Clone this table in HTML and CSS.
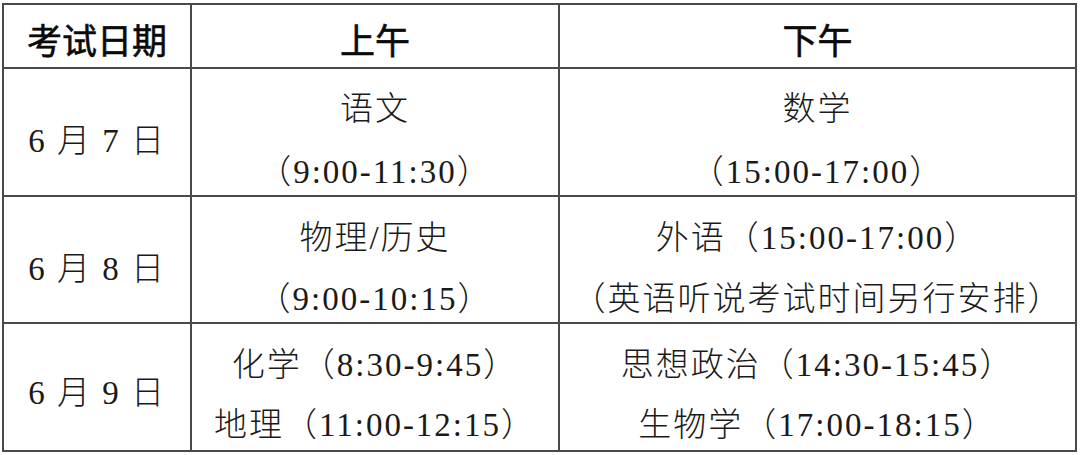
FILE: index.html
```html
<!DOCTYPE html>
<html lang="zh-CN">
<head>
<meta charset="utf-8">
<title>考试日程</title>
<link rel="stylesheet" href="styles.css">
</head>
<body>
<div class="wrap">
  <div class="schedule">
    <div class="cell head">考试日期</div>
    <div class="cell head">上午</div>
    <div class="cell head">下午</div>

    <div class="cell date r1">6 月 7 日</div>
    <div class="cell body r1"><div class="line">语文</div><div class="line">（9:00-11:30）</div></div>
    <div class="cell body r1"><div class="line">数学</div><div class="line">（15:00-17:00）</div></div>

    <div class="cell date r2">6 月 8 日</div>
    <div class="cell body r2"><div class="line">物理/历史</div><div class="line">（9:00-10:15）</div></div>
    <div class="cell body r2"><div class="line">外语（15:00-17:00）</div><div class="line">（英语听说考试时间另行安排）</div></div>

    <div class="cell date r3">6 月 9 日</div>
    <div class="cell body r3"><div class="line">化学（8:30-9:45）</div><div class="line">地理（11:00-12:15）</div></div>
    <div class="cell body r3"><div class="line">思想政治（14:30-15:45）</div><div class="line">生物学（17:00-18:15）</div></div>
  </div>
</div>
</body>
</html>
```

FILE: styles.css
```css
html, body {
  margin: 0;
  padding: 0;
  background: #ffffff;
}

.wrap {
  padding: 3px 0 0 2px;
}

.schedule {
  display: grid;
  grid-template-columns: 186px 366px 515px;
  grid-template-rows: 62px 126px 125px 126px;
  gap: 2px;
  padding: 2px;
  width: 1075px;
  box-sizing: border-box;
  background: #4a4a4a;
  color: #151515;
}

.cell {
  background: #ffffff;
  text-align: center;
  overflow: visible;
  box-sizing: border-box;
}

.head {
  font-family: "Noto Sans CJK SC", "Noto Sans", sans-serif;
  font-weight: 400;
  font-size: 35px;
  line-height: 40px;
  padding-top: 14px;
  color: #0a0a0a;
  -webkit-text-stroke: 0.6px #0a0a0a;
}

.date,
.body {
  font-family: "Liberation Serif", "Noto Sans CJK SC", serif;
  font-weight: 300;
  font-size: 33px;
  letter-spacing: 2px;
  color: #1a1a1a;
}

.date {
  display: flex;
  align-items: center;
  justify-content: center;
  line-height: 40px;
  padding-top: 18px;
}

.date.r3 { padding-top: 12px; }

.body { padding-top: 9px; }
.body.r2 { padding-top: 11px; }
.body.r3 { padding-top: 11px; }

.line { line-height: 61px; }
.r1 .line { line-height: 63px; }
.r3 .line { line-height: 60px; }
```
